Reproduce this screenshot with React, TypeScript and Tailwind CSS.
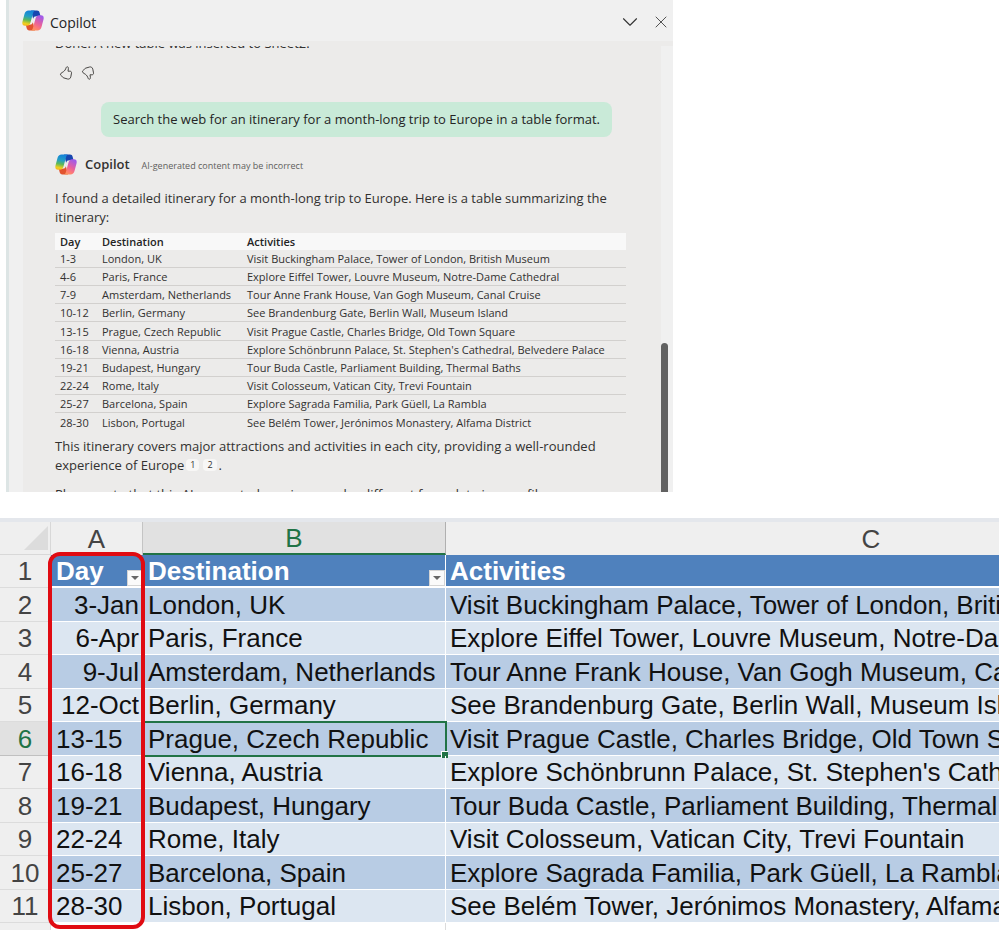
import { ChevronDown, X } from "lucide-react";

type Stop = { days: string; cell: string; place: string; activities: string };

const stops: Stop[] = [
  { days: "1-3", cell: "3-Jan", place: "London, UK", activities: "Visit Buckingham Palace, Tower of London, British Museum" },
  { days: "4-6", cell: "6-Apr", place: "Paris, France", activities: "Explore Eiffel Tower, Louvre Museum, Notre-Dame Cathedral" },
  { days: "7-9", cell: "9-Jul", place: "Amsterdam, Netherlands", activities: "Tour Anne Frank House, Van Gogh Museum, Canal Cruise" },
  { days: "10-12", cell: "12-Oct", place: "Berlin, Germany", activities: "See Brandenburg Gate, Berlin Wall, Museum Island" },
  { days: "13-15", cell: "13-15", place: "Prague, Czech Republic", activities: "Visit Prague Castle, Charles Bridge, Old Town Square" },
  { days: "16-18", cell: "16-18", place: "Vienna, Austria", activities: "Explore Schönbrunn Palace, St. Stephen's Cathedral, Belvedere Palace" },
  { days: "19-21", cell: "19-21", place: "Budapest, Hungary", activities: "Tour Buda Castle, Parliament Building, Thermal Baths" },
  { days: "22-24", cell: "22-24", place: "Rome, Italy", activities: "Visit Colosseum, Vatican City, Trevi Fountain" },
  { days: "25-27", cell: "25-27", place: "Barcelona, Spain", activities: "Explore Sagrada Familia, Park Güell, La Rambla" },
  { days: "28-30", cell: "28-30", place: "Lisbon, Portugal", activities: "See Belém Tower, Jerónimos Monastery, Alfama District" },
];

function CopilotLogo({ id }: { id: string }) {
  return (
    <svg viewBox="0 0 22 21" className="w-[22px] h-[21px] shrink-0" aria-hidden="true">
      <defs>
        <linearGradient id={`${id}-left`} x1="7" y1="1" x2="4" y2="16" gradientUnits="userSpaceOnUse">
          <stop offset="0" stopColor="#1583d8" />
          <stop offset="0.35" stopColor="#239fc4" />
          <stop offset="0.6" stopColor="#5cb85a" />
          <stop offset="0.85" stopColor="#f0cf1c" />
          <stop offset="1" stopColor="#f5b524" />
        </linearGradient>
        <linearGradient id={`${id}-right`} x1="18" y1="6" x2="10" y2="20" gradientUnits="userSpaceOnUse">
          <stop offset="0" stopColor="#a25be8" />
          <stop offset="0.45" stopColor="#e6609f" />
          <stop offset="0.75" stopColor="#ff7b75" />
          <stop offset="1" stopColor="#fb9a58" />
        </linearGradient>
      </defs>
      <path d="M9 .6h6c1.500 0 2.300.8 2.700 2.300l.8 3.300h-4.200c-1.700 0-2.700.8-3.200 2.500z" fill="#1746b0" />
      <path d="M13 20.400H7.300c-1.500 0-2.300-.8-2.700-2.300l-.8-3.300h3.900c1.700 0 2.700-.8 3.200-2.500z" fill="#e2532f" />
      <path d="M6.600.6h6.600c-1.200.3-1.700 1.200-2.100 2.500L8.500 12.500c-.6 2-1.500 3.300-3.700 3.300H3C.6 15.800-.1 14 .5 11.600l2-7.600C3.100 1.800 4.400.6 6.600.6z" fill={`url(#${id}-left)`} />
      <path d="M15.400 20.400H8.800c1.200-.3 1.700-1.200 2.100-2.500l2.600-9.400c.6-2 1.500-3.300 3.700-3.300H19c2.400 0 3.100 1.800 2.500 4.200l-2 7.600c-.6 2.200-1.900 3.400-4.100 3.400z" fill={`url(#${id}-right)`} />
    </svg>
  );
}

function ThumbIcon({ down = false }: { down?: boolean }) {
  return (
    <svg
      viewBox="0 0 14 14"
      className={down ? "w-3.5 h-3.5 -scale-y-100" : "w-3.5 h-3.5"}
      fill="none"
      stroke="#484644"
      strokeWidth="1"
      strokeLinejoin="round"
      aria-hidden="true"
    >
      <path d="M8.200.8c.9 0 1.400.8 1.200 1.800L9 5.200h1.900c1.200 0 1.800.8 1.600 1.900l-.7 3.700c-.4 1.700-1.600 2.600-3.200 2.200l-3.800-1.100c-.8-.2-1.200-.7-1.500-1.300-.2-.5-.5-.7-1-.9-.7-.3-1-.9-.8-1.500.2-.8.900-1.300 1.600-1.700C4.900 5.600 6 4.500 6.700 2.800l.6-1.400c.2-.4.500-.6.900-.6z" />
    </svg>
  );
}

function Reference({ label }: { label: string }) {
  return (
    <a href={`#source-${label}`} className="inline-block ml-0.5 mr-0.5 px-1 rounded-sm bg-[#f8f7f6] text-[9px] leading-3 align-[2px]">
      {label}
    </a>
  );
}

function CopilotPane() {
  return (
    <section className="w-full max-w-[673px] pl-1.5 font-['Open_Sans','Noto_Sans',sans-serif] text-[13px] text-[#323130]">
      <div className="border-l-[3px] border-[#dde5e5] bg-[#f0f0f0]">
        <header className="flex items-center h-[41px] pl-[13px] pr-0.5">
          <CopilotLogo id="pane" />
          <h1 className="ml-1.5 mt-1 text-sm font-normal text-[#242424]">Copilot</h1>
          <button className="ml-auto mt-0.5 mr-2 text-[#333]" aria-label="Pane options">
            <ChevronDown size={26} strokeWidth={1} />
          </button>
          <button className="mt-0.5 text-[#333]" aria-label="Close">
            <X size={20} strokeWidth={1} />
          </button>
        </header>

        <div className="flex ml-3.5 pt-[5px] bg-[#ecebea]">
          <div className="flex-1 h-[446px] pl-8 overflow-hidden">
            <p className="-mt-3 leading-[19px]">Done! A new table was inserted to Sheet2.</p>
            <div className="flex gap-2 mt-[13px] ml-1">
              <button aria-label="Like"><ThumbIcon /></button>
              <button aria-label="Dislike"><ThumbIcon down /></button>
            </div>

            <div className="flex justify-end mt-[22px] mr-[49px]">
              <p className="px-3 py-2 rounded-lg bg-[#c9ead8] leading-[19px] text-[#242424] whitespace-nowrap">
                Search the web for an itinerary for a month-long trip to Europe in a table format.
              </p>
            </div>

            <div className="flex items-center mt-[17px]">
              <CopilotLogo id="reply" />
              <h2 className="ml-2 font-semibold">Copilot</h2>
              <span className="ml-3 mt-0.5 text-[9px] text-[#605e5c]">AI-generated content may be incorrect</span>
            </div>

            <p className="mt-3.5 mr-8 leading-[19px]">
              I found a detailed itinerary for a month-long trip to Europe. Here is a table summarizing the itinerary:
            </p>

            <table className="w-[571px] mt-1.5 table-fixed border-separate border-spacing-0 text-left text-[11px] leading-[17px] whitespace-nowrap">
              <colgroup>
                <col className="w-[47px]" />
                <col className="w-[145px]" />
                <col />
              </colgroup>
              <thead>
                <tr className="h-[17px] bg-[#f8f8f8] text-[#242424]">
                  <th className="pl-[5px] font-semibold">Day</th>
                  <th className="font-semibold">Destination</th>
                  <th className="font-semibold">Activities</th>
                </tr>
              </thead>
              <tbody className="[&_td]:border-b [&_td]:border-[#d2d0ce] [&_tr:last-child_td]:border-0">
                {stops.map((s) => (
                  <tr key={s.days} className="h-[18px] nth-[5n]:h-[19px]">
                    <td className="pl-[5px]">{s.days}</td>
                    <td>{s.place}</td>
                    <td>{s.activities}</td>
                  </tr>
                ))}
              </tbody>
            </table>

            <p className="mt-[5px] mr-8 leading-[19px]">
              This itinerary covers major attractions and activities in each city, providing a well-rounded experience of Europe
              <Reference label="1" />
              <Reference label="2" />.
            </p>
            <p className="mt-2.5 leading-[19px] whitespace-nowrap">
              Please note that this AI-generated preview may be different from data in your file.
            </p>
          </div>
          <div className="flex w-3 pt-[297px] bg-[#f0f0f0]">
            <div className="w-[7px] rounded-t-full bg-[#616161]" />
          </div>
        </div>
      </div>
    </section>
  );
}

function FilterButton({ label }: { label: string }) {
  return (
    <button aria-label={`Filter ${label}`} className="absolute right-0 bottom-0 flex items-center justify-center w-4 h-4 bg-[#fafafa] border border-[#d4d4d4]">
      <svg viewBox="0 0 8 4" className="w-2 h-1 shrink-0" aria-hidden="true">
        <path d="M0 0h8L4 4z" fill="#666" />
      </svg>
    </button>
  );
}

function Sheet() {
  return (
    <section className="relative mt-[26px] pt-1 overflow-hidden bg-[#e4e7ec] font-['Liberation_Sans',Arial,sans-serif] text-[26px] leading-[30px] text-[#111]">
      <table className="w-[1296px] table-fixed border-separate border-spacing-0 bg-white whitespace-nowrap">
        <colgroup>
          <col className="w-[51px]" />
          <col className="w-[92px]" />
          <col className="w-[303px]" />
          <col />
        </colgroup>
        <thead>
          <tr className="h-[33px] bg-[#efefef] text-[#444]">
            <th className="border-r border-b border-[#d8d8d8]">
              <svg viewBox="0 0 24 24" className="w-6 h-6 ml-6" aria-label="Select all">
                <path d="M24 0v24H0z" fill="#dcdcdc" />
              </svg>
            </th>
            <th className="border-r border-[#c4c4c4] font-normal">A</th>
            <th className="border-r border-b-2 border-r-[#b0b0b0] border-b-[#217346] bg-[#e1e1e1] pt-px font-normal text-[#217346]">B</th>
            <th className="font-normal">C</th>
          </tr>
        </thead>
        <tbody>
          <tr className="h-[33px] bg-[#4f81bd] text-left text-white">
            <th className="border-r border-b border-[#dcdcdc] bg-[#efefef] text-center font-normal text-[#444]">1</th>
            <th className="relative pl-[5px] border-b-2 border-white">
              Day
              <FilterButton label="Day" />
            </th>
            <th className="relative pl-[5px] border-r border-b-2 border-white">
              Destination
              <FilterButton label="Destination" />
            </th>
            <th className="pl-1 border-b-2 border-white">Activities</th>
          </tr>
          {stops.map((s, i) => {
            const active = i === 4;
            return (
              <tr key={s.days} className="odd:h-[33px] even:h-[34px] odd:bg-[#dce6f1] even:bg-[#b8cce4]">
                <th
                  className={
                    active
                      ? "border-r border-b border-[#c0c0c0] bg-[#e1e1e1] font-normal text-[#217346]"
                      : "border-r border-b border-[#dcdcdc] bg-[#efefef] font-normal text-[#444]"
                  }
                >
                  {i + 2}
                </th>
                <td className={i < 4 ? "pr-1 border-b border-white text-right" : "pl-[5px] border-b border-white"}>{s.cell}</td>
                <td className="relative pl-[5px] border-r border-b border-white">
                  {s.place}
                  {active && (
                    <span className="absolute -top-px -bottom-0.5 -left-px -right-0.5 border-2 border-[#217346]">
                      <span className="absolute -right-[3px] -bottom-[3px] w-[7px] h-[7px] border-t border-l border-white bg-[#217346]" />
                    </span>
                  )}
                </td>
                <td className="pl-1 border-b border-white">{s.activities}</td>
              </tr>
            );
          })}
          <tr className="h-2">
            <th className="border-r border-[#dcdcdc] bg-[#efefef]" />
            <td />
            <td className="border-r border-[#dcdcdc]" />
            <td />
          </tr>
        </tbody>
      </table>

      <div className="absolute top-[34px] left-12 w-[97px] h-[377px] rounded-xl border-4 border-[#e00b12]" />
    </section>
  );
}

export default function App() {
  return (
    <main className="bg-white overflow-hidden">
      <CopilotPane />
      <Sheet />
    </main>
  );
}
